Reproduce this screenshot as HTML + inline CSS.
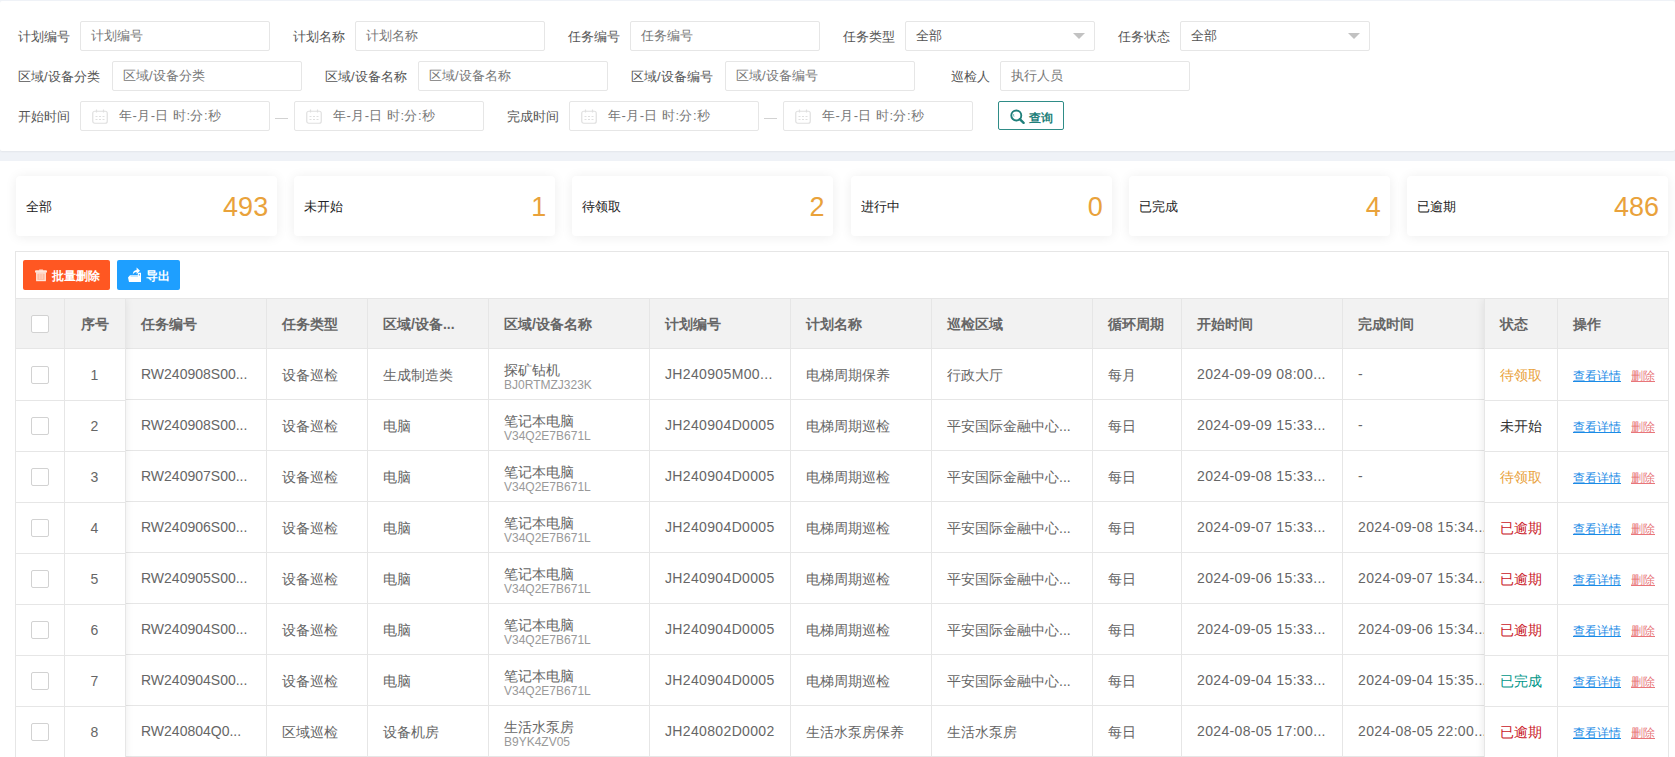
<!DOCTYPE html><html><head><meta charset="utf-8"><style>
*{box-sizing:border-box;margin:0;padding:0}
html,body{width:1675px;height:757px;overflow:hidden;background:#eff2f7;font-family:"Liberation Sans", sans-serif;color:#666}
.abs{position:absolute}
.top{position:absolute;left:0;top:1px;width:1675px;height:150px;background:#fff;border-radius:2px;box-shadow:0 1px 2px rgba(0,0,0,.05)}
.bot{position:absolute;left:0;top:161px;width:1675px;height:600px;background:#fff}
.lbl{position:absolute;font-size:13px;color:#555;line-height:16px;white-space:nowrap}
.inp{position:absolute;height:30px;width:190px;border:1px solid #e6e6e6;border-radius:2px;background:#fff;font-size:13px;color:#777;line-height:28px;padding-left:10px;white-space:nowrap}
.sel .arr{position:absolute;right:9px;top:11px;width:0;height:0;border-left:6px solid transparent;border-right:6px solid transparent;border-top:6px solid #c2c2c2}
.date{padding-left:38px;letter-spacing:0.45px}
.cal{position:absolute;left:11px;top:7px;width:16px;height:15px}
.dash{position:absolute;width:13px;height:1px;background:#d2d2d2}
.qbtn{position:absolute;left:998px;top:101px;width:66px;height:29px;border:1px solid #2f8c87;border-radius:2px;color:#1f7f7a;font-size:12px;font-weight:bold;line-height:27px;white-space:nowrap}
.card{position:absolute;top:176px;width:261px;height:60px;background:#fff;border-radius:4px;box-shadow:0 1px 12px rgba(0,0,0,.075)}
.card .t{position:absolute;left:10px;top:23px;font-size:13px;color:#222;line-height:16px}
.card .n{position:absolute;right:9px;top:15px;font-size:27px;color:#e9a23b;line-height:32px}
.tbl{position:absolute;left:15px;top:251px;width:1654px;height:520px;border:1px solid #e6e6e6;background:#fff}
.btn{position:absolute;top:260px;height:30px;border-radius:2px;color:#fff;font-size:12px;line-height:30px;white-space:nowrap}
.hline{position:absolute;height:1px;background:#e6e6e6}
.vline{position:absolute;width:1px;background:#e6e6e6}
.hd{position:absolute;top:299px;height:49px;background:#f2f2f2}
.th{position:absolute;font-size:14px;font-weight:bold;color:#666;line-height:18px;white-space:nowrap;top:315px}
.td{position:absolute;font-size:14px;color:#666;line-height:18px;white-space:nowrap}
.ls{letter-spacing:0.35px}
.sub{position:absolute;font-size:12px;color:#999;line-height:14px;white-space:nowrap}
.cb{position:absolute;left:31px;width:18px;height:18px;border:1px solid #d2d2d2;border-radius:2px;background:#fff}
.lk{position:absolute;font-size:12px;line-height:14px;text-decoration:underline;white-space:nowrap}
</style></head><body><div class="top"></div><div class="bot"></div><div class="lbl" style="left:18px;top:29px">计划编号</div><div class="inp " style="left:80px;top:21px;width:190px">计划编号</div><div class="lbl" style="left:293px;top:29px">计划名称</div><div class="inp " style="left:355px;top:21px;width:190px">计划名称</div><div class="lbl" style="left:568px;top:29px">任务编号</div><div class="inp " style="left:630px;top:21px;width:190px">任务编号</div><div class="lbl" style="left:843px;top:29px">任务类型</div><div class="inp sel" style="left:905px;top:21px;color:#555">全部<span class="arr"></span></div><div class="lbl" style="left:1118px;top:29px">任务状态</div><div class="inp sel" style="left:1180px;top:21px;color:#555">全部<span class="arr"></span></div><div class="lbl" style="left:18px;top:69px">区域/设备分类</div><div class="inp " style="left:112px;top:61px;width:190px">区域/设备分类</div><div class="lbl" style="left:325px;top:69px">区域/设备名称</div><div class="inp " style="left:418px;top:61px;width:190px">区域/设备名称</div><div class="lbl" style="left:631px;top:69px">区域/设备编号</div><div class="inp " style="left:725px;top:61px;width:190px">区域/设备编号</div><div class="lbl" style="left:951px;top:69px">巡检人</div><div class="inp " style="left:1000px;top:61px;width:190px">执行人员</div><div class="lbl" style="left:18px;top:109px">开始时间</div><div class="inp date" style="left:80px;top:101px"><svg class="cal" viewBox="0 0 16 15"><rect x="0.75" y="2.25" width="14.5" height="12" rx="2" fill="none" stroke="#e0e0e0" stroke-width="1.2"/><line x1="4.5" y1="0.5" x2="4.5" y2="3.5" stroke="#e0e0e0" stroke-width="1.2"/><line x1="11.5" y1="0.5" x2="11.5" y2="3.5" stroke="#e0e0e0" stroke-width="1.2"/><g fill="#e0e0e0"><rect x="3.5" y="7" width="2" height="1"/><rect x="7" y="7" width="2" height="1"/><rect x="10.5" y="7" width="2" height="1"/><rect x="3.5" y="10" width="2" height="1"/><rect x="7" y="10" width="2" height="1"/><rect x="10.5" y="10" width="2" height="1"/></g></svg>年-月-日 时:分:秒</div><div class="dash" style="left:275px;top:118px"></div><div class="inp date" style="left:294px;top:101px"><svg class="cal" viewBox="0 0 16 15"><rect x="0.75" y="2.25" width="14.5" height="12" rx="2" fill="none" stroke="#e0e0e0" stroke-width="1.2"/><line x1="4.5" y1="0.5" x2="4.5" y2="3.5" stroke="#e0e0e0" stroke-width="1.2"/><line x1="11.5" y1="0.5" x2="11.5" y2="3.5" stroke="#e0e0e0" stroke-width="1.2"/><g fill="#e0e0e0"><rect x="3.5" y="7" width="2" height="1"/><rect x="7" y="7" width="2" height="1"/><rect x="10.5" y="7" width="2" height="1"/><rect x="3.5" y="10" width="2" height="1"/><rect x="7" y="10" width="2" height="1"/><rect x="10.5" y="10" width="2" height="1"/></g></svg>年-月-日 时:分:秒</div><div class="lbl" style="left:507px;top:109px">完成时间</div><div class="inp date" style="left:569px;top:101px"><svg class="cal" viewBox="0 0 16 15"><rect x="0.75" y="2.25" width="14.5" height="12" rx="2" fill="none" stroke="#e0e0e0" stroke-width="1.2"/><line x1="4.5" y1="0.5" x2="4.5" y2="3.5" stroke="#e0e0e0" stroke-width="1.2"/><line x1="11.5" y1="0.5" x2="11.5" y2="3.5" stroke="#e0e0e0" stroke-width="1.2"/><g fill="#e0e0e0"><rect x="3.5" y="7" width="2" height="1"/><rect x="7" y="7" width="2" height="1"/><rect x="10.5" y="7" width="2" height="1"/><rect x="3.5" y="10" width="2" height="1"/><rect x="7" y="10" width="2" height="1"/><rect x="10.5" y="10" width="2" height="1"/></g></svg>年-月-日 时:分:秒</div><div class="dash" style="left:764px;top:118px"></div><div class="inp date" style="left:783px;top:101px"><svg class="cal" viewBox="0 0 16 15"><rect x="0.75" y="2.25" width="14.5" height="12" rx="2" fill="none" stroke="#e0e0e0" stroke-width="1.2"/><line x1="4.5" y1="0.5" x2="4.5" y2="3.5" stroke="#e0e0e0" stroke-width="1.2"/><line x1="11.5" y1="0.5" x2="11.5" y2="3.5" stroke="#e0e0e0" stroke-width="1.2"/><g fill="#e0e0e0"><rect x="3.5" y="7" width="2" height="1"/><rect x="7" y="7" width="2" height="1"/><rect x="10.5" y="7" width="2" height="1"/><rect x="3.5" y="10" width="2" height="1"/><rect x="7" y="10" width="2" height="1"/><rect x="10.5" y="10" width="2" height="1"/></g></svg>年-月-日 时:分:秒</div><div class="qbtn"><svg style="position:absolute;left:11px;top:7px" width="16" height="15" viewBox="0 0 16 15"><circle cx="6.3" cy="6.5" r="5" fill="none" stroke="#1f7f7a" stroke-width="1.9"/><path d="M3.6 5.2 Q3.4 6.4 4 7.6" fill="none" stroke="#5fb0ab" stroke-width="1"/><line x1="9.8" y1="10.2" x2="13.6" y2="13.8" stroke="#1f7f7a" stroke-width="2.4" stroke-linecap="round"/></svg><span style="position:absolute;left:30px;top:3px">查询</span></div><div class="card" style="left:16.0px;width:261.17px"><span class="t">全部</span><span class="n">493</span></div><div class="card" style="left:294.17px;width:261.17px"><span class="t">未开始</span><span class="n">1</span></div><div class="card" style="left:572.33px;width:261.17px"><span class="t">待领取</span><span class="n">2</span></div><div class="card" style="left:850.5px;width:261.17px"><span class="t">进行中</span><span class="n">0</span></div><div class="card" style="left:1128.67px;width:261.17px"><span class="t">已完成</span><span class="n">4</span></div><div class="card" style="left:1406.83px;width:261.17px"><span class="t">已逾期</span><span class="n">486</span></div><div class="tbl"></div><div class="btn" style="left:23px;width:87px;background:#ff5722"><svg style="position:absolute;left:12px;top:9px" width="12" height="13" viewBox="0 0 12 13"><rect x="4" y="0.4" width="4.2" height="1.4" rx="0.6" fill="#ffe6da"/><rect x="0" y="1.3" width="12" height="2.4" rx="1" fill="#ffe6da"/><rect x="1.75" y="3.95" width="8.5" height="7.6" fill="#ffb89c" stroke="#ffe6da" stroke-width="1.3"/><path d="M4.3 5v5.2M6 5v5.2M7.7 5v5.2" stroke="#ffd2bf" stroke-width="1"/></svg><span style="position:absolute;left:29px;top:1px;font-weight:bold">批量删除</span></div><div class="btn" style="left:117px;width:63px;background:#1e9fff"><svg style="position:absolute;left:10px;top:6px" width="16" height="17" viewBox="0 0 16 17"><path d="M1 11.5 L3 9.2 H10.8 V6.8 H14 V16 H2 Z" fill="#fff"/><rect x="11.8" y="8" width="1.2" height="1.6" fill="#5cb6ff"/><path d="M3.6 10.3 H11" stroke="#8ccdff" stroke-width="0.6"/><path d="M5.8 8.6 C5.8 5.8 7.2 4.2 9.6 4 V1.6 L13 4.8 L9.6 8 V6 C7.8 6.1 6.6 7.2 5.8 8.6 Z" fill="#fff"/></svg><span style="position:absolute;left:29px;top:1px;font-weight:bold">导出</span></div><div class="hline" style="left:16px;top:298px;width:1652px"></div><div class="hd" style="left:16px;width:1652px"></div><div class="hline" style="left:16px;top:348px;width:1652px"></div><div class="hline" style="left:125px;top:399px;width:1359px"></div><div class="hline" style="left:125px;top:450px;width:1359px"></div><div class="hline" style="left:125px;top:501px;width:1359px"></div><div class="hline" style="left:125px;top:552px;width:1359px"></div><div class="hline" style="left:125px;top:603px;width:1359px"></div><div class="hline" style="left:125px;top:654px;width:1359px"></div><div class="hline" style="left:125px;top:705px;width:1359px"></div><div class="hline" style="left:125px;top:756px;width:1359px"></div><div class="vline" style="left:125px;top:299px;height:460px"></div><div class="vline" style="left:266px;top:299px;height:460px"></div><div class="vline" style="left:367px;top:299px;height:460px"></div><div class="vline" style="left:488px;top:299px;height:460px"></div><div class="vline" style="left:649px;top:299px;height:460px"></div><div class="vline" style="left:790px;top:299px;height:460px"></div><div class="vline" style="left:931px;top:299px;height:460px"></div><div class="vline" style="left:1092px;top:299px;height:460px"></div><div class="vline" style="left:1181px;top:299px;height:460px"></div><div class="vline" style="left:1342px;top:299px;height:460px"></div><div class="th" style="left:141px">任务编号</div><div class="th" style="left:282px">任务类型</div><div class="th" style="left:383px">区域/设备...</div><div class="th" style="left:504px">区域/设备名称</div><div class="th" style="left:665px">计划编号</div><div class="th" style="left:806px">计划名称</div><div class="th" style="left:947px">巡检区域</div><div class="th" style="left:1108px">循环周期</div><div class="th" style="left:1197px">开始时间</div><div class="th" style="left:1358px">完成时间</div><div class="td" style="left:141px;top:365px">RW240908S00...</div><div class="td" style="left:282px;top:366px">设备巡检</div><div class="td" style="left:383px;top:366px">生成制造类</div><div class="td" style="left:504px;top:361px">探矿钻机</div><div class="sub" style="left:504px;top:378px">BJ0RTMZJ323K</div><div class="td ls" style="left:665px;top:365px">JH240905M00...</div><div class="td" style="left:806px;top:366px">电梯周期保养</div><div class="td" style="left:947px;top:366px">行政大厅</div><div class="td" style="left:1108px;top:366px">每月</div><div class="td ls" style="left:1197px;top:365px">2024-09-09 08:00...</div><div class="td" style="left:1358px;top:365px">-</div><div class="td" style="left:141px;top:416px">RW240908S00...</div><div class="td" style="left:282px;top:417px">设备巡检</div><div class="td" style="left:383px;top:417px">电脑</div><div class="td" style="left:504px;top:412px">笔记本电脑</div><div class="sub" style="left:504px;top:429px">V34Q2E7B671L</div><div class="td ls" style="left:665px;top:416px">JH240904D0005</div><div class="td" style="left:806px;top:417px">电梯周期巡检</div><div class="td" style="left:947px;top:417px">平安国际金融中心...</div><div class="td" style="left:1108px;top:417px">每日</div><div class="td ls" style="left:1197px;top:416px">2024-09-09 15:33...</div><div class="td" style="left:1358px;top:416px">-</div><div class="td" style="left:141px;top:467px">RW240907S00...</div><div class="td" style="left:282px;top:468px">设备巡检</div><div class="td" style="left:383px;top:468px">电脑</div><div class="td" style="left:504px;top:463px">笔记本电脑</div><div class="sub" style="left:504px;top:480px">V34Q2E7B671L</div><div class="td ls" style="left:665px;top:467px">JH240904D0005</div><div class="td" style="left:806px;top:468px">电梯周期巡检</div><div class="td" style="left:947px;top:468px">平安国际金融中心...</div><div class="td" style="left:1108px;top:468px">每日</div><div class="td ls" style="left:1197px;top:467px">2024-09-08 15:33...</div><div class="td" style="left:1358px;top:467px">-</div><div class="td" style="left:141px;top:518px">RW240906S00...</div><div class="td" style="left:282px;top:519px">设备巡检</div><div class="td" style="left:383px;top:519px">电脑</div><div class="td" style="left:504px;top:514px">笔记本电脑</div><div class="sub" style="left:504px;top:531px">V34Q2E7B671L</div><div class="td ls" style="left:665px;top:518px">JH240904D0005</div><div class="td" style="left:806px;top:519px">电梯周期巡检</div><div class="td" style="left:947px;top:519px">平安国际金融中心...</div><div class="td" style="left:1108px;top:519px">每日</div><div class="td ls" style="left:1197px;top:518px">2024-09-07 15:33...</div><div class="td ls" style="left:1358px;top:518px">2024-09-08 15:34...</div><div class="td" style="left:141px;top:569px">RW240905S00...</div><div class="td" style="left:282px;top:570px">设备巡检</div><div class="td" style="left:383px;top:570px">电脑</div><div class="td" style="left:504px;top:565px">笔记本电脑</div><div class="sub" style="left:504px;top:582px">V34Q2E7B671L</div><div class="td ls" style="left:665px;top:569px">JH240904D0005</div><div class="td" style="left:806px;top:570px">电梯周期巡检</div><div class="td" style="left:947px;top:570px">平安国际金融中心...</div><div class="td" style="left:1108px;top:570px">每日</div><div class="td ls" style="left:1197px;top:569px">2024-09-06 15:33...</div><div class="td ls" style="left:1358px;top:569px">2024-09-07 15:34...</div><div class="td" style="left:141px;top:620px">RW240904S00...</div><div class="td" style="left:282px;top:621px">设备巡检</div><div class="td" style="left:383px;top:621px">电脑</div><div class="td" style="left:504px;top:616px">笔记本电脑</div><div class="sub" style="left:504px;top:633px">V34Q2E7B671L</div><div class="td ls" style="left:665px;top:620px">JH240904D0005</div><div class="td" style="left:806px;top:621px">电梯周期巡检</div><div class="td" style="left:947px;top:621px">平安国际金融中心...</div><div class="td" style="left:1108px;top:621px">每日</div><div class="td ls" style="left:1197px;top:620px">2024-09-05 15:33...</div><div class="td ls" style="left:1358px;top:620px">2024-09-06 15:34...</div><div class="td" style="left:141px;top:671px">RW240904S00...</div><div class="td" style="left:282px;top:672px">设备巡检</div><div class="td" style="left:383px;top:672px">电脑</div><div class="td" style="left:504px;top:667px">笔记本电脑</div><div class="sub" style="left:504px;top:684px">V34Q2E7B671L</div><div class="td ls" style="left:665px;top:671px">JH240904D0005</div><div class="td" style="left:806px;top:672px">电梯周期巡检</div><div class="td" style="left:947px;top:672px">平安国际金融中心...</div><div class="td" style="left:1108px;top:672px">每日</div><div class="td ls" style="left:1197px;top:671px">2024-09-04 15:33...</div><div class="td ls" style="left:1358px;top:671px">2024-09-04 15:35...</div><div class="td" style="left:141px;top:722px">RW240804Q0...</div><div class="td" style="left:282px;top:723px">区域巡检</div><div class="td" style="left:383px;top:723px">设备机房</div><div class="td" style="left:504px;top:718px">生活水泵房</div><div class="sub" style="left:504px;top:735px">B9YK4ZV05</div><div class="td ls" style="left:665px;top:722px">JH240802D0002</div><div class="td" style="left:806px;top:723px">生活水泵房保养</div><div class="td" style="left:947px;top:723px">生活水泵房</div><div class="td" style="left:1108px;top:723px">每日</div><div class="td ls" style="left:1197px;top:722px">2024-08-05 17:00...</div><div class="td ls" style="left:1358px;top:722px">2024-08-05 22:00...</div><div class="abs" style="left:16px;top:299px;width:109px;height:460px;background:#fff;box-shadow:1px 0 8px rgba(0,0,0,.08);clip-path:inset(0 -12px 0 0)"></div><div class="hd" style="left:16px;width:109px"></div><div class="hline" style="left:16px;top:348px;width:109px"></div><div class="hline" style="left:16px;top:400px;width:109px"></div><div class="hline" style="left:16px;top:451px;width:109px"></div><div class="hline" style="left:16px;top:502px;width:109px"></div><div class="hline" style="left:16px;top:553px;width:109px"></div><div class="hline" style="left:16px;top:604px;width:109px"></div><div class="hline" style="left:16px;top:655px;width:109px"></div><div class="hline" style="left:16px;top:706px;width:109px"></div><div class="hline" style="left:16px;top:757px;width:109px"></div><div class="vline" style="left:64px;top:299px;height:460px"></div><div class="vline" style="left:125px;top:299px;height:460px"></div><div class="th" style="left:81px">序号</div><div class="cb" style="top:315px"></div><div class="cb" style="top:366px"></div><div class="td" style="left:64px;width:61px;text-align:center;top:366px">1</div><div class="cb" style="top:417px"></div><div class="td" style="left:64px;width:61px;text-align:center;top:417px">2</div><div class="cb" style="top:468px"></div><div class="td" style="left:64px;width:61px;text-align:center;top:468px">3</div><div class="cb" style="top:519px"></div><div class="td" style="left:64px;width:61px;text-align:center;top:519px">4</div><div class="cb" style="top:570px"></div><div class="td" style="left:64px;width:61px;text-align:center;top:570px">5</div><div class="cb" style="top:621px"></div><div class="td" style="left:64px;width:61px;text-align:center;top:621px">6</div><div class="cb" style="top:672px"></div><div class="td" style="left:64px;width:61px;text-align:center;top:672px">7</div><div class="cb" style="top:723px"></div><div class="td" style="left:64px;width:61px;text-align:center;top:723px">8</div><div class="abs" style="left:1484px;top:299px;width:184px;height:460px;background:#fff;box-shadow:-1px 0 8px rgba(0,0,0,.08);clip-path:inset(0 0 0 -12px)"></div><div class="hd" style="left:1484px;width:184px"></div><div class="vline" style="left:1484px;top:299px;height:460px"></div><div class="hline" style="left:1484px;top:348px;width:184px"></div><div class="hline" style="left:1484px;top:400px;width:184px"></div><div class="hline" style="left:1484px;top:451px;width:184px"></div><div class="hline" style="left:1484px;top:502px;width:184px"></div><div class="hline" style="left:1484px;top:553px;width:184px"></div><div class="hline" style="left:1484px;top:604px;width:184px"></div><div class="hline" style="left:1484px;top:655px;width:184px"></div><div class="hline" style="left:1484px;top:706px;width:184px"></div><div class="hline" style="left:1484px;top:757px;width:184px"></div><div class="vline" style="left:1557px;top:299px;height:460px"></div><div class="vline" style="left:1668px;top:251px;height:510px"></div><div class="th" style="left:1500px">状态</div><div class="th" style="left:1573px">操作</div><div class="td" style="left:1484px;width:73px;text-align:center;top:366px;color:#e9a23b">待领取</div><div class="lk" style="left:1573px;top:369px;color:#1b8be6">查看详情</div><div class="lk" style="left:1631px;top:369px;color:#e8767a">删除</div><div class="td" style="left:1484px;width:73px;text-align:center;top:417px;color:#333">未开始</div><div class="lk" style="left:1573px;top:420px;color:#1b8be6">查看详情</div><div class="lk" style="left:1631px;top:420px;color:#e8767a">删除</div><div class="td" style="left:1484px;width:73px;text-align:center;top:468px;color:#e9a23b">待领取</div><div class="lk" style="left:1573px;top:471px;color:#1b8be6">查看详情</div><div class="lk" style="left:1631px;top:471px;color:#e8767a">删除</div><div class="td" style="left:1484px;width:73px;text-align:center;top:519px;color:#c9151e">已逾期</div><div class="lk" style="left:1573px;top:522px;color:#1b8be6">查看详情</div><div class="lk" style="left:1631px;top:522px;color:#e8767a">删除</div><div class="td" style="left:1484px;width:73px;text-align:center;top:570px;color:#c9151e">已逾期</div><div class="lk" style="left:1573px;top:573px;color:#1b8be6">查看详情</div><div class="lk" style="left:1631px;top:573px;color:#e8767a">删除</div><div class="td" style="left:1484px;width:73px;text-align:center;top:621px;color:#c9151e">已逾期</div><div class="lk" style="left:1573px;top:624px;color:#1b8be6">查看详情</div><div class="lk" style="left:1631px;top:624px;color:#e8767a">删除</div><div class="td" style="left:1484px;width:73px;text-align:center;top:672px;color:#009688">已完成</div><div class="lk" style="left:1573px;top:675px;color:#1b8be6">查看详情</div><div class="lk" style="left:1631px;top:675px;color:#e8767a">删除</div><div class="td" style="left:1484px;width:73px;text-align:center;top:723px;color:#c9151e">已逾期</div><div class="lk" style="left:1573px;top:726px;color:#1b8be6">查看详情</div><div class="lk" style="left:1631px;top:726px;color:#e8767a">删除</div></body></html>
